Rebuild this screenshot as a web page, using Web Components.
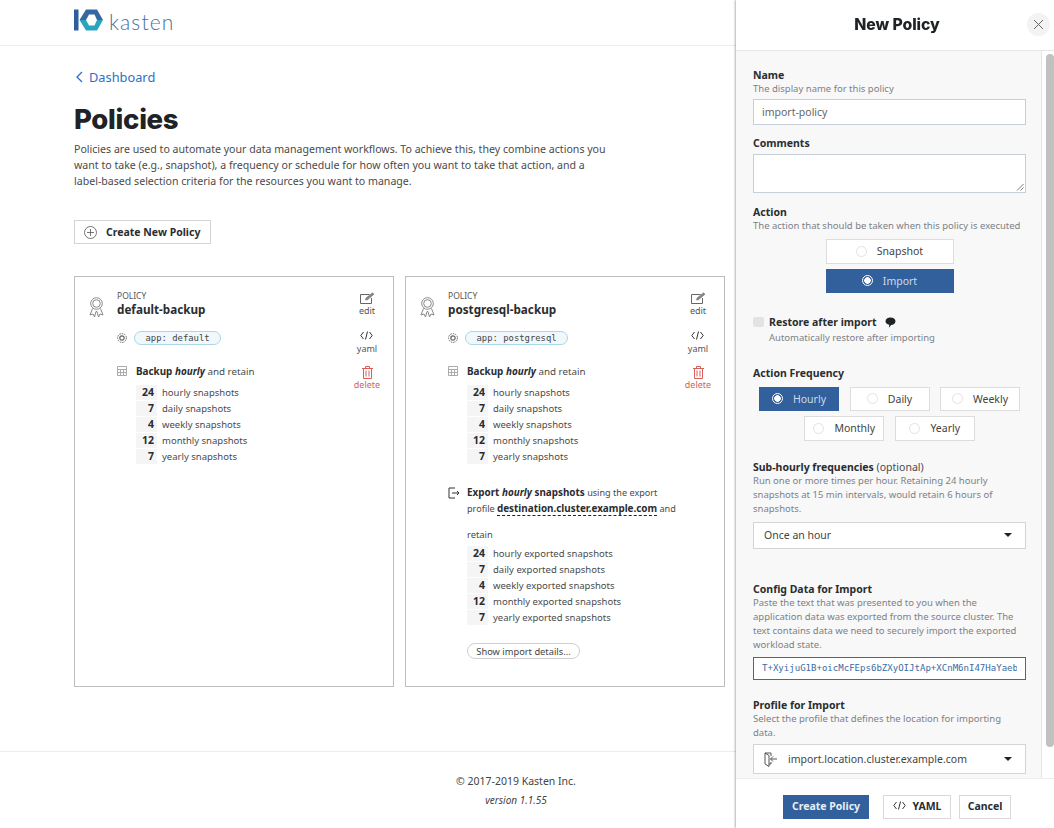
<!DOCTYPE html>
<html lang="en">
<head>
<meta charset="utf-8">
<title>Policies</title>
<style>
  html, body { margin: 0; height: 100%; overflow: hidden; background: #fff; }
  body { font-family: "Noto Sans", "Open Sans", sans-serif; color: #4a4a4a; }
</style>
</head>
<body>
<k-top-bar></k-top-bar>
<k-page>
  <k-policy-card name="default-backup" selector="app: default"></k-policy-card>
  <k-policy-card name="postgresql-backup" selector="app: postgresql" exported></k-policy-card>
</k-page>
<k-page-footer></k-page-footer>

<k-side-panel title="New Policy">
  <k-field label="Name" help="The display name for this policy" gap="3">
    <k-text-box value="import-policy"></k-text-box>
  </k-field>
  <k-field label="Comments" top="11">
    <k-text-box area></k-text-box>
  </k-field>
  <k-field label="Action" help="The action that should be taken when this policy is executed" top="12" gap="6">
    <k-choice-group>
      <k-choice label="Snapshot" width="128" height="25"></k-choice>
      <k-choice label="Import" width="128" height="24" selected></k-choice>
    </k-choice-group>
  </k-field>
  <k-check-row label="Restore after import" help="Automatically restore after importing"></k-check-row>
  <k-field label="Action Frequency" top="21" gap="7">
    <k-choice-group wide>
      <k-choice label="Hourly" width="80" height="24" selected></k-choice>
      <k-choice label="Daily" width="80" height="24"></k-choice>
      <k-choice label="Weekly" width="80" height="24"></k-choice>
      <k-choice label="Monthly" width="80" height="25"></k-choice>
      <k-choice label="Yearly" width="80" height="25"></k-choice>
    </k-choice-group>
  </k-field>
  <k-field label="Sub-hourly frequencies" note="(optional)" help="Run one or more times per hour. Retaining 24 hourly snapshots at 15 min intervals, would retain 6 hours of snapshots." top="19" gap="6">
    <k-select-box value="Once an hour"></k-select-box>
  </k-field>
  <k-field label="Config Data for Import" help="Paste the text that was presented to you when the application data was exported from the source cluster. The text contains data we need to securely import the exported workload state." top="33" gap="5">
    <k-text-box focused mono value="T+XyijuG1B+oicMcFEps6bZXyOIJtAp+XCnM6nI47HaYaeb"></k-text-box>
  </k-field>
  <k-field label="Profile for Import" help="Select the profile that defines the location for importing data." top="18" gap="4">
    <k-select-box value="import.location.cluster.example.com" icon></k-select-box>
  </k-field>
</k-side-panel>

<script>
const ICONS = {
  ribbon: `<svg width="17" height="21" viewBox="0 0 17 21" fill="none" stroke="#888" stroke-width="1"><circle cx="8.5" cy="6.5" r="5.8"/><circle cx="8.5" cy="6.5" r="3.8"/><path d="M4.5 11.5 2 18l3-1 1.5 3L8 14.5 9 14.500 10.500 20l1.500-3 3 1-2.500-6.500"/></svg>`,
  edit: `<svg width="15" height="12" viewBox="0 0 15 12" fill="none" stroke="#666" stroke-width="1"><path d="M9.500 2.500H.5v9h11V6"/><path d="M5.500 8 6 6 12.500 .8l1.500 1.400L7.500 7.800z" fill="#888" stroke-width=".5"/></svg>`,
  code: `<svg width="13" height="9" viewBox="0 0 13 9" fill="none" stroke="#333" stroke-width="1"><path d="M3.500 1 .8 4.500 3.500 8M9.500 1l2.700 3.500L9.500 8M7.500 .5l-2 8"/></svg>`,
  trash: `<svg width="11" height="13" viewBox="0 0 11 13" fill="none" stroke="#d9605a" stroke-width="1"><path d="M0 2.500h11M3.500 2.500V.5h4v2M1.500 2.500v10h8v-10M4 4.500v6M7 4.500v6"/></svg>`,
  target: `<svg width="10" height="10" viewBox="0 0 10 10" fill="none" stroke="#666"><circle cx="5" cy="5" r="4.400" stroke-dasharray="1.500 1"/><circle cx="5" cy="5" r="2.200" stroke-width="1.200"/></svg>`,
  calendar: `<svg width="10" height="10" viewBox="0 0 10 10" fill="none" stroke="#aaa" stroke-width="1"><path d="M.5 .5h9v9h-9zM.5 3.500h9M.5 6.500h9M3.500 3.500v6M6.500 3.500v6"/></svg>`,
  exportIcon: `<svg width="12" height="12" viewBox="0 0 12 12" fill="none" stroke="#333" stroke-width="1"><path d="M7 1H1v10h6M4 6h7M9 4l2 2-2 2"/></svg>`,
  importIcon: `<svg width="13" height="15" viewBox="0 0 13 15" fill="none" stroke="#555" stroke-width="1"><path d="M7 4V1H1v11l4 2.500V3.500L1 1M7 10v2H5M13 7H6.500M9 4.500 6.500 7 9 9.500"/></svg>`,
  plus: `<svg width="13" height="13" viewBox="0 0 13 13" fill="none" stroke="#666" stroke-width=".9"><circle cx="6.500" cy="6.500" r="6"/><path d="M6.500 3v7M3 6.500h7"/></svg>`,
  close: `<svg width="11" height="11" viewBox="0 0 11 11" fill="none" stroke="#666" stroke-width="1"><path d="M1 1l9 9M10 1l-9 9"/></svg>`,
  bubble: `<svg width="11" height="11" viewBox="0 0 11 11" fill="#1f2326"><path d="M5.500 .5c2.800 0 5 1.500 5 3.800S8.300 8 6 8c-.4.900-1 1.800-2.200 2.400.4-.9.500-1.700.4-2.600C2 7.400.5 6.200.5 4.300.5 2 2.700.5 5.500.5z"/></svg>`
};

// ── Top bar with the logo ──
class KTopBar extends HTMLElement {
  connectedCallback() {
    this.attachShadow({ mode: 'open' }).innerHTML = `
      <style>
        :host { display: flex; align-items: center; gap: 5px; height: 46px; box-sizing: border-box; padding: 0 0 5px 74px; border-bottom: 1px solid #ececec; }
        .word { font: 300 21px Lato, sans-serif; letter-spacing: 1.100px; color: #44719f; line-height: 1; padding-top: 2px; }
        svg { display: block; }
      </style>
      <svg width="30" height="22" viewBox="0 0 30 22">
        <rect x="0" y="0.500" width="4.500" height="21" fill="#2f5f9b"/>
        <path d="M12 .5h11L29 11h-6L20.500 5.500H15L12 11H5.500z" fill="#35689f"/>
        <path d="M5.500 11H12l3 5.500h5.500L23 11h6L23 21.500H12z" fill="#2aa5c0"/>
      </svg>
      <span class="word">kasten</span>`;
  }
}

// ── Page content: breadcrumb, heading, intro, cards slot ──
class KPage extends HTMLElement {
  connectedCallback() {
    this.attachShadow({ mode: 'open' }).innerHTML = `
      <style>
        :host { display: block; width: 735px; box-sizing: border-box; padding: 22px 0 0 74px; height: 705px; }
        a { display: flex; align-items: center; gap: 6px; height: 18px; padding-left: 2px; font-size: 12.800px; color: #2c6ecb; text-decoration: none; }
        h1 { margin: 16px 0 0; font: 800 27.500px/34px Inter, sans-serif; color: #1f2326; letter-spacing: -.3px; }
        p { margin: 5px 0 0; width: 540px; font-size: 10.600px; line-height: 16px; color: #4a4a4a; }
        button { display: flex; align-items: center; gap: 9px; margin-top: 31px; width: 137px; height: 24px; padding: 0 0 0 9px; background: #fff; border: 1px solid #d4d4d4; font: 700 10.500px "Noto Sans", sans-serif; color: #2a2d30; box-sizing: border-box; }
        .cards { display: flex; align-items: stretch; gap: 11px; margin-top: 32px; }
      </style>
      <a><svg width="7" height="12" viewBox="0 0 7 12" fill="none" stroke="#2c6ecb" stroke-width="1.300"><path d="M6 1 1 6l5 5"/></svg>Dashboard</a>
      <h1>Policies</h1>
      <p>Policies are used to automate your data management workflows. To achieve this, they combine actions you want to take (e.g., snapshot), a frequency or schedule for how often you want to take that action, and a label-based selection criteria for the resources you want to manage.</p>
      <button>${ICONS.plus}Create New Policy</button>
      <div class="cards"><slot></slot></div>`;
  }
}

// ── Retention table ──
class KRetain extends HTMLElement {
  connectedCallback() {
    const word = this.hasAttribute('exported') ? 'exported snapshots' : 'snapshots';
    const rows = [[24, 'hourly'], [7, 'daily'], [4, 'weekly'], [12, 'monthly'], [7, 'yearly']];
    this.attachShadow({ mode: 'open' }).innerHTML = `
      <style>
        :host { display: flex; flex-direction: column; gap: 1px; font-size: 9.500px; color: #4a4a4a; }
        .row { display: flex; align-items: center; gap: 5px; height: 15px; }
        b { width: 21px; height: 15px; padding-right: 3px; box-sizing: border-box; background: #f5f5f5; text-align: right; line-height: 15px; color: #2a2d30; font-size: 10.500px; }
      </style>
      ${rows.map(([n, w]) => `<div class="row"><b>${n}</b><span>${w} ${word}</span></div>`).join('')}`;
  }
}

// ── Policy card ──
class KPolicyCard extends HTMLElement {
  connectedCallback() {
    const name = this.getAttribute('name');
    const selector = this.getAttribute('selector');
    const exported = this.hasAttribute('exported') ? `
      <div class="line export">
        <span class="ic">${ICONS.exportIcon}</span>
        <div><strong>Export <em>hourly</em> snapshots</strong> using the export profile <strong class="dash">destination.cluster.example.com</strong> and</div>
      </div>
      <div class="retain-word">retain</div>
      <k-retain exported></k-retain>
      <button>Show import details...</button>` : '';
    this.attachShadow({ mode: 'open' }).innerHTML = `
      <style>
        :host { display: grid; grid-template-columns: minmax(0, 1fr) 42px; width: 320px; height: 411px; box-sizing: border-box; border: 1px solid #bdbdbd; padding: 13px 5px 0 13px; color: #4a4a4a; }
        .main { display: grid; grid-template-columns: 16px 1fr; column-gap: 13px; align-content: start; }
        .badge { padding-top: 7px; height: 20px; }
        .badge svg { display: block; }
        .kicker { font-size: 8.500px; line-height: 11px; color: #555; }
        .name { font-size: 11.700px; font-weight: 700; line-height: 16px; color: #2a2d30; }
        .body { grid-column: 2; }
        .label { display: flex; align-items: center; gap: 7px; margin-top: 14px; }
        .pill { display: inline-block; height: 14px; box-sizing: border-box; padding: 0 10.500px; border: 1px solid #a9d7e6; border-radius: 8px; background: #f1f8fb; font: 8.900px/12px "DejaVu Sans Mono", monospace; color: #444; }
        .line { display: grid; grid-template-columns: 19px 1fr; line-height: 15.500px; font-size: 9.800px; }
        .ic { padding-top: 2px; }
        .ic svg { display: block; }
        .backup { margin-top: 19px; margin-bottom: 5.500px; }
        strong { font-weight: 700; color: #2a2d30; font-size: 9.900px; }
        em { font-style: italic; }
        k-retain { margin-left: 19px; }
        .export { margin-top: 21px; width: 232px; font-size: 9.100px; }
        .dash { border-bottom: 1px dashed #222; }
        .retain-word { margin: 10.500px 0 4.500px 19px; font-size: 9.400px; line-height: 15px; }
        button { display: block; margin: 18px 0 0 19px; width: 113px; height: 16px; padding: 0; background: #fff; border: 1px solid #cfcfcf; border-radius: 8px; font: 9.300px "Noto Sans", sans-serif; color: #444; }
        .actions { display: flex; flex-direction: column; align-items: center; font-size: 9px; color: #555; }
        .act { display: flex; flex-direction: column; align-items: center; line-height: 13px; }
        .act svg { display: block; }
        .edit { height: 37px; padding-top: 2px; box-sizing: border-box; }
        .yaml { height: 37px; padding-top: 4px; box-sizing: border-box; }
        .yaml svg { margin-bottom: 2px; }
        .del { color: #d9605a; padding-top: 2px; }
        .del svg { margin-bottom: -1px; }
      </style>
      <div class="main">
        <div class="badge">${ICONS.ribbon}</div>
        <div><div class="kicker">POLICY</div><div class="name">${name}</div></div>
        <div class="body">
          <div class="label">${ICONS.target}<span class="pill">${selector}</span></div>
          <div class="line backup"><span class="ic">${ICONS.calendar}</span><div><strong>Backup <em>hourly</em></strong> and retain</div></div>
          <k-retain></k-retain>
          ${exported}
        </div>
      </div>
      <div class="actions">
        <div class="act edit">${ICONS.edit}<span>edit</span></div>
        <div class="act yaml">${ICONS.code}<span>yaml</span></div>
        <div class="act del">${ICONS.trash}<span>delete</span></div>
      </div>`;
  }
}

class KPageFooter extends HTMLElement {
  connectedCallback() {
    this.attachShadow({ mode: 'open' }).innerHTML = `
      <style>
        :host { display: block; width: 1032px; box-sizing: border-box; border-top: 1px solid #ececec; padding-top: 21px; text-align: center; font-size: 10.500px; color: #444; }
        div { line-height: 17px; }
        .v { margin-top: 2px; font-size: 10px; font-style: italic; }
      </style>
      <div>© 2017-2019 Kasten Inc.</div>
      <div class="v">version 1.1.55</div>`;
  }
}

// ── Slide-over panel ──
class KSidePanel extends HTMLElement {
  connectedCallback() {
    this.attachShadow({ mode: 'open' }).innerHTML = `
      <style>
        :host { position: fixed; top: 0; right: 0; bottom: 0; width: 318px; display: flex; flex-direction: column; background: #fff; box-shadow: -1px 0 2px rgba(0,0,0,.3); z-index: 10; }
        header { flex: none; height: 51px; box-sizing: border-box; display: flex; align-items: center; justify-content: center; position: relative; border-bottom: 1px solid #e6e6e6; padding-left: 4px; }
        h2 { margin: 0 0 2px; font: 800 15.800px Inter, sans-serif; color: #1f2326; letter-spacing: -.1px; }
        .x { position: absolute; right: 4px; top: 13px; width: 23px; height: 23px; border-radius: 50%; background: #f3f3f3; display: flex; align-items: center; justify-content: center; }
        .mid { flex: 1; min-height: 0; display: flex; }
        .scroll { flex: 1; min-width: 0; overflow: hidden; background: #f8f8f8; border-right: 1px solid #e6e6e6; padding: 17px 0 0 17px; }
        .track { flex: none; width: 12px; box-sizing: border-box; padding: 3px 0 0 4px; background: #fff; }
        .thumb { width: 8px; height: 693px; background: #c1c1c1; border-radius: 4px; }
        footer { flex: none; height: 50px; display: flex; align-items: center; gap: 14px; padding: 6px 0 0 47px; box-sizing: border-box; background: #fff; border-top: 1px solid #eee; }
        button { height: 24px; padding: 0 0 2px; box-sizing: border-box; background: #fff; border: 1px solid #d8d8d8; font: 700 10.500px "Noto Sans", sans-serif; color: #2a2d30; display: flex; align-items: center; justify-content: center; }
        .go { width: 86px; background: #31609c; border-color: #31609c; color: #e8eef6; }
        .yaml { width: 68px; gap: 7px; margin-right: -6px; }
        .cancel { width: 52px; }
      </style>
      <header><h2>${this.getAttribute('title')}</h2><span class="x">${ICONS.close}</span></header>
      <div class="mid">
        <div class="scroll"><slot></slot></div>
        <div class="track"><div class="thumb"></div></div>
      </div>
      <footer>
        <button class="go">Create Policy</button>
        <button class="yaml">${ICONS.code}YAML</button>
        <button class="cancel">Cancel</button>
      </footer>`;
  }
}

class KField extends HTMLElement {
  connectedCallback() {
    const help = this.getAttribute('help');
    const note = this.getAttribute('note');
    this.attachShadow({ mode: 'open' }).innerHTML = `
      <style>
        :host { display: block; margin-top: ${this.getAttribute('top') || 0}px; width: 273px; }
        .l { font-size: 10.500px; font-weight: 700; line-height: 14px; color: #2a2d30; }
        .n { font-weight: 400; color: #4a4a4a; }
        .h { width: 271px; font-size: 9.500px; line-height: 14px; color: #7c8187; }
        .box { margin-top: ${this.getAttribute('gap') || 4}px; }
      </style>
      <div class="l">${this.getAttribute('label')}${note ? ` <span class="n">${note}</span>` : ''}</div>
      ${help ? `<div class="h">${help}</div>` : ''}
      <div class="box"><slot></slot></div>`;
  }
}

class KTextBox extends HTMLElement {
  connectedCallback() {
    const area = this.hasAttribute('area');
    const focused = this.hasAttribute('focused');
    const mono = this.hasAttribute('mono');
    this.attachShadow({ mode: 'open' }).innerHTML = `
      <style>
        :host { display: block; position: relative; box-sizing: border-box; width: 273px; height: ${area ? 39 : focused ? 23 : 26}px; background: #fff; border: 1px solid ${focused ? '#1f6fd6' : '#c5ced9'}; padding: 0 8px; white-space: nowrap; font: ${mono ? '9.050px/21px "DejaVu Sans Mono", monospace' : '10.500px/24px "Noto Sans", sans-serif'}; color: ${focused ? '#3b6ba5' : '#666'}; }
        .cut { display: block; overflow: hidden; }
        svg { position: absolute; right: 1px; bottom: 1px; }
      </style>
      <span class="cut">${this.getAttribute('value') || ''}</span>
      ${area ? `<svg width="8" height="8" viewBox="0 0 8 8" stroke="#555" stroke-width=".8"><path d="M1 7.500 7.500 1M4.500 7.500l3-3"/></svg>` : ''}`;
  }
}

class KSelectBox extends HTMLElement {
  connectedCallback() {
    const icon = this.hasAttribute('icon');
    this.attachShadow({ mode: 'open' }).innerHTML = `
      <style>
        :host { display: flex; align-items: center; box-sizing: border-box; width: 273px; height: ${icon ? 30 : 27}px; background: #fff; border: 1px solid #d4d4d4; padding: 0 13px ${icon ? 0 : 2}px 10px; gap: 11px; font-size: 10.500px; color: #444; }
        .v { flex: 1; }
        .c { width: 0; height: 0; border-left: 4px solid transparent; border-right: 4px solid transparent; border-top: 4px solid #222; }
        svg { display: block; }
      </style>
      ${icon ? ICONS.importIcon : ''}<span class="v">${this.getAttribute('value')}</span><span class="c"></span>`;
  }
}

// ── Radio buttons laid out in centred rows ──
class KChoiceGroup extends HTMLElement {
  connectedCallback() {
    const wide = this.hasAttribute('wide');
    this.attachShadow({ mode: 'open' }).innerHTML = `
      <style>
        :host { display: flex; flex-wrap: wrap; justify-content: center; gap: ${wide ? '5px 10.500px' : '5px 20px'}; width: 273px; }
      </style><slot></slot>`;
  }
}

class KChoice extends HTMLElement {
  connectedCallback() {
    const on = this.hasAttribute('selected');
    this.attachShadow({ mode: 'open' }).innerHTML = `
      <style>
        :host { display: flex; align-items: center; justify-content: center; gap: 10px; box-sizing: border-box; width: ${this.getAttribute('width')}px; height: ${this.getAttribute('height')}px; padding-bottom: 1px; background: ${on ? '#31609c' : '#fff'}; border: 1px solid ${on ? '#31609c' : '#ddd'}; font-size: 10.500px; color: ${on ? '#cfdbea' : '#444'}; }
        i { width: 11px; height: 11px; box-sizing: border-box; border-radius: 50%; border: 1px solid ${on ? '#fff' : '#e2e2e2'}; background: ${on ? 'radial-gradient(circle, #fff 3px, #31609c 3.500px)' : '#fff'}; }
      </style>
      <i></i><span>${this.getAttribute('label')}</span>`;
  }
}

class KCheckRow extends HTMLElement {
  connectedCallback() {
    this.attachShadow({ mode: 'open' }).innerHTML = `
      <style>
        :host { display: grid; grid-template-columns: 11px 1fr; column-gap: 5px; margin-top: 22px; }
        i { width: 11px; height: 10px; margin-top: 2px; background: #e3e3e3; border-radius: 2px; }
        .l { display: flex; align-items: center; gap: 9px; font-size: 10.500px; font-weight: 700; line-height: 14px; color: #2a2d30; }
        .h { grid-column: 2; margin-top: 1px; font-size: 9.500px; line-height: 15px; color: #7c8187; }
      </style>
      <i></i><div class="l">${this.getAttribute('label')}${ICONS.bubble}</div>
      <div class="h">${this.getAttribute('help')}</div>`;
  }
}

customElements.define('k-top-bar', KTopBar);
customElements.define('k-page', KPage);
customElements.define('k-retain', KRetain);
customElements.define('k-policy-card', KPolicyCard);
customElements.define('k-page-footer', KPageFooter);
customElements.define('k-side-panel', KSidePanel);
customElements.define('k-field', KField);
customElements.define('k-text-box', KTextBox);
customElements.define('k-select-box', KSelectBox);
customElements.define('k-choice-group', KChoiceGroup);
customElements.define('k-choice', KChoice);
customElements.define('k-check-row', KCheckRow);
</script>
</body>
</html>
